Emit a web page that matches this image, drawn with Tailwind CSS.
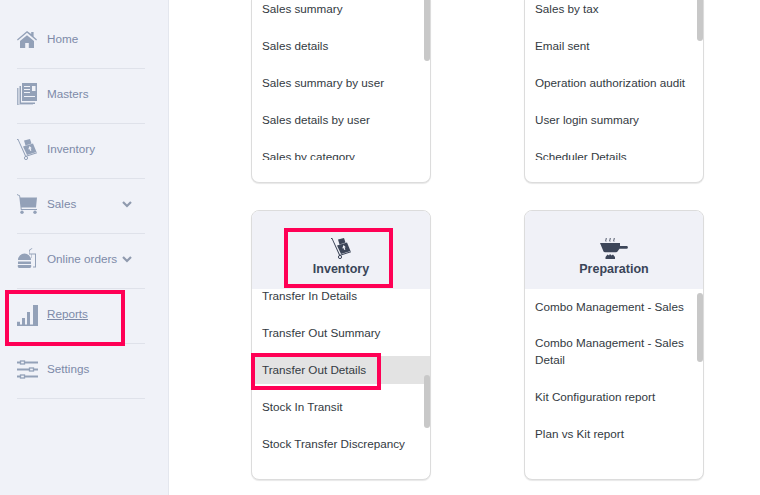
<!DOCTYPE html>
<html lang="en">
<head>
  <meta charset="UTF-8" />
  <title>Reports</title>
  <script src="https://cdn.jsdelivr.net/npm/@tailwindcss/browser@4"></script>
</head>
<body class="bg-white overflow-hidden font-['Liberation_Sans',Arial,sans-serif]">
<div class="relative flex w-[760px] h-[495px]">

  <!-- sidebar -->
  <aside class="w-[169px] h-full shrink-0 bg-[#f0f2f8] border-r border-[#e4e7ee] pt-[14px] pl-[17px] pr-[23px] text-[11.7px] text-[#7d8aa8]">
    <a class="flex items-center h-[55px] pb-[4px] border-b border-[#dfe2ea]">
      <svg class="w-[20px] h-[17px] text-[#93a1b8]" viewBox="0 0 20 17" fill="currentColor"><path d="M10 0 0 8.400l.8 1L10 1.800l9.200 7.600.8-1-3.400-2.900V1h-2.400v1.900z"/><path d="M3 10v7h5.200v-5h3.600v5H17v-7l-7-5.800z"/></svg>
      <span class="ml-[10px]">Home</span>
    </a>
    <a class="flex items-center h-[55px] pb-[4px] border-b border-[#dfe2ea]">
      <svg class="w-[20px] h-[22px] text-[#93a1b8]" viewBox="0 0 20 22" fill="currentColor"><path d="M5 0h15v18H5z"/><path d="M2.500 3H4v16.500h14V21H2.500z"/><path d="M0 5h1.500v16.500H16V22H0z" opacity=".8"/><path fill="#f0f2f8" d="M7 3h6v1H7zm0 3h6v1H7zm0 3h6v1H7zm0 4h11v1H7zm8-10h3.500v5H15z"/></svg>
      <span class="ml-[10px]">Masters</span>
    </a>
    <a class="flex items-center h-[55px] pb-[4px] border-b border-[#dfe2ea]">
      <svg class="w-[20px] h-[21px] text-[#93a1b8]" viewBox="0 0 20 21" fill="currentColor"><path d="M0 0h1.300L9 16.800l10.800-3.500.3 1L8.400 18 .8 1H0z"/><circle cx="9" cy="19" r="1.600" fill="none" stroke="currentColor"/><path d="M6 7.500l10-3 3.500 8.500L10 16zM7 1.500 13 0l1.500 4.500-6 2z"/><path fill="#f0f2f8" d="M12.500 7l2.300 2.300-1.200.3.800 2-1.200.4-.8-2-1.200.4z"/></svg>
      <span class="ml-[10px]">Inventory</span>
    </a>
    <a class="flex items-center h-[55px] pb-[4px] border-b border-[#dfe2ea]">
      <svg class="w-[20px] h-[20px] text-[#93a1b8]" viewBox="0 0 20 20" fill="currentColor"><path d="M0 0l3 1.500.400 2H20l-1 10H4.500l.2 1.500H20v1H3.800L2.200 2 0 1z"/><circle cx="5" cy="18.300" r="1.700"/><circle cx="18" cy="18.300" r="1.700"/></svg>
      <span class="ml-[10px]">Sales</span>
      <svg class="ml-auto mr-[13px] w-[10px] h-[7px] text-[#8f9aae]" viewBox="0 0 10 7" fill="none" stroke="currentColor" stroke-width="2.200"><path d="M1 1l4 4 4-4"/></svg>
    </a>
    <a class="flex items-center h-[55px] pb-[4px] border-b border-[#dfe2ea]">
      <svg class="w-[21px] h-[22px] text-[#93a1b8]" viewBox="0 0 21 22" fill="currentColor"><path d="M1 12a6.500 6.500 0 0 1 13 0zM1 13.500h13V16H1zM1 17h13a2 2 0 0 1-2 3H3a2 2 0 0 1-2-3z"/><path d="M12 2l3-2 .4.600-2.600 1.800-.4 3h6.600v14h-3v-1h2V6.500h-3.500v3.500H14V6.500h-2z"/></svg>
      <span class="ml-[9px]">Online orders</span>
      <svg class="ml-auto mr-[13px] w-[10px] h-[7px] text-[#8f9aae]" viewBox="0 0 10 7" fill="none" stroke="currentColor" stroke-width="2.200"><path d="M1 1l4 4 4-4"/></svg>
    </a>
    <a class="flex items-center h-[55px] pb-[4px] border-b border-[#dfe2ea]">
      <svg class="w-[21px] h-[21px] mt-[3px] text-[#93a1b8]" viewBox="0 0 21 21" fill="currentColor"><path d="M0 19.500h21V21H0zM0 16.700h3V20H0zM5 13h3v7H5zM10 7h3v13h-3zM16 0h5v20h-5z"/></svg>
      <span class="ml-[9px] underline">Reports</span>
    </a>
    <a class="flex items-center h-[55px] pb-[4px] border-b border-[#dfe2ea]">
      <svg class="w-[21px] h-[19px] text-[#93a1b8]" viewBox="0 0 21 19" fill="none" stroke="currentColor" stroke-width="2"><path d="M0 2.500h3m5 0h13M0 9.500h12m5 0h4M0 16.500h3m5 0h13"/><rect x="3.500" y="1" width="4" height="3" stroke-width="1.300"/><rect x="12.500" y="8" width="4" height="3" stroke-width="1.300"/><rect x="3.500" y="15" width="4" height="3" stroke-width="1.300"/></svg>
      <span class="ml-[9px]">Settings</span>
    </a>
  </aside>

  <!-- report cards -->
  <main class="flex-1 pl-[82px] grid grid-cols-[180px_180px] gap-x-[93px] content-start text-[11.7px] text-[#333a42]">

    <!-- Sales -->
    <div class="relative h-[183px] bg-white border border-t-0 border-[#dcdcdc] rounded-b-[8px] overflow-hidden shadow-[0_1px_1px_#e8e8e8]">
      <div class="h-[160px] overflow-hidden pl-[10px]">
        <div class="-mt-[5px]">
          <div class="flex items-center h-[28px] mb-[9px]">Sales summary</div>
          <div class="flex items-center h-[28px] mb-[9px]">Sales details</div>
          <div class="flex items-center h-[28px] mb-[9px]">Sales summary by user</div>
          <div class="flex items-center h-[28px] mb-[9px]">Sales details by user</div>
          <div class="flex items-center h-[28px] mb-[9px]">Sales by category</div>
        </div>
      </div>
      <div class="absolute right-0 top-0 w-[6px] h-[61px] rounded-b-[3px] bg-[#c8c8c8]"></div>
    </div>

    <!-- Users -->
    <div class="relative h-[183px] bg-white border border-t-0 border-[#dcdcdc] rounded-b-[8px] overflow-hidden shadow-[0_1px_1px_#e8e8e8]">
      <div class="h-[160px] overflow-hidden pl-[10px]">
        <div class="-mt-[5px]">
          <div class="flex items-center h-[28px] mb-[9px]">Sales by tax</div>
          <div class="flex items-center h-[28px] mb-[9px]">Email sent</div>
          <div class="flex items-center h-[28px] mb-[9px]">Operation authorization audit</div>
          <div class="flex items-center h-[28px] mb-[9px]">User login summary</div>
          <div class="flex items-center h-[28px] mb-[9px]">Scheduler Details</div>
        </div>
      </div>
      <div class="absolute right-0 top-0 w-[6px] h-[41px] rounded-b-[3px] bg-[#c8c8c8]"></div>
    </div>

    <!-- Inventory -->
    <div class="relative mt-[27px] h-[270px] bg-white border border-[#dcdcdc] rounded-[8px] overflow-hidden shadow-[0_1px_1px_#e8e8e8]">
      <div class="h-[78px] bg-[#f0f1f7] flex flex-col items-center justify-end pb-[12px] text-[#3a4558]">
        <svg class="w-[20px] h-[21px] mb-[3px]" viewBox="0 0 20 21" fill="#3d4659"><path d="M0 0h1.300L9 16.800l10.800-3.500.3 1L8.400 18 .8 1H0z"/><circle cx="9" cy="19" r="1.600" fill="none" stroke="#3d4659"/><path d="M6 7.500l10-3 3.500 8.500L10 16zM7 1.500 13 0l1.500 4.500-6 2z"/><path fill="#f0f1f7" d="M12.500 7l2.300 2.300-1.200.3.800 2-1.200.4-.8-2-1.200.4z"/></svg>
        <span class="font-bold text-[12.5px] leading-[15px]">Inventory</span>
      </div>
      <div class="h-[173px] overflow-hidden">
        <div class="-mt-[7px]">
          <div class="flex items-center h-[28px] mb-[9px] pl-[10px]">Transfer In Details</div>
          <div class="flex items-center h-[28px] mb-[9px] pl-[10px]">Transfer Out Summary</div>
          <div class="flex items-center h-[28px] mb-[9px] pl-[10px] bg-[#e3e3e3]">Transfer Out Details</div>
          <div class="flex items-center h-[28px] mb-[9px] pl-[10px]">Stock In Transit</div>
          <div class="flex items-center h-[28px] mb-[9px] pl-[10px]">Stock Transfer Discrepancy</div>
        </div>
      </div>
      <div class="absolute right-0 top-[164px] w-[6px] h-[53px] rounded-[3px] bg-[#c8c8c8]"></div>
    </div>

    <!-- Preparation -->
    <div class="relative mt-[27px] h-[270px] bg-white border border-[#dcdcdc] rounded-[8px] overflow-hidden shadow-[0_1px_1px_#e8e8e8]">
      <div class="h-[78px] bg-[#f0f1f7] flex flex-col items-center justify-end pb-[12px] text-[#3a4558]">
        <svg class="w-[28px] h-[21px] mb-[3px]" viewBox="0 0 28 21" fill="#3d4659"><path d="M0 5h20v3h6.500a1.300 1.300 0 0 1 0 2.800H19.500l-2 2.700a2 2 0 0 1-1.500.8H5a2 2 0 0 1-1.500-.8z"/><path d="M5.500 21v-2l2-2.500 1.500 1 1-1.500 1.500 1.500 1.500-1 2 2.500v2z"/><path d="M6 0c1 1-1 2 0 3.500M10 0c1 1-1 2 0 3.500M14 0c1 1-1 2 0 3.500" fill="none" stroke="#3d4659"/></svg>
        <span class="font-bold text-[12.5px] leading-[15px]">Preparation</span>
      </div>
      <div class="pl-[10px] pt-[3px] pr-[8px] leading-[17px]">
        <div class="py-[5.5px] mb-[8px]">Combo Management - Sales</div>
        <div class="py-[5.5px] mb-[9px]">Combo Management - Sales Detail</div>
        <div class="py-[5.5px] mb-[9px]">Kit Configuration report</div>
        <div class="py-[5.5px] mb-[9px]">Plan vs Kit report</div>
      </div>
      <div class="absolute right-0 top-[82px] w-[6px] h-[69px] rounded-[3px] bg-[#c8c8c8]"></div>
    </div>
  </main>

  <!-- annotation boxes -->
  <div class="absolute left-[5px] top-[290px] w-[120px] h-[56px] border-[4px] border-[#ff0055]"></div>
  <div class="absolute left-[284px] top-[228px] w-[109px] h-[60px] border-[4px] border-[#ff0055]"></div>
  <div class="absolute left-[251px] top-[353px] w-[130px] h-[37px] border-[4px] border-[#ff0055]"></div>
</div>
</body>
</html>
